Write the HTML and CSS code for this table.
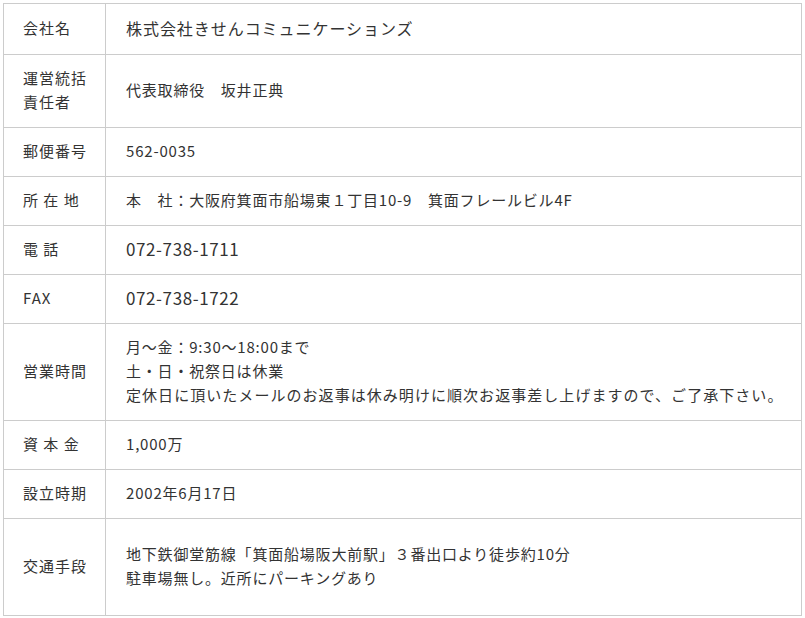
FILE: index.html
```html
<!DOCTYPE html>
<html lang="ja">
<head>
  <meta charset="UTF-8">
  <title>会社概要</title>
  <link rel="stylesheet" href="styles.css">
</head>
<body>
  <div class="wrap">
    <table class="company-table">
      <tr>
        <th>会社名</th>
        <td class="big">株式会社きせんコミュニケーションズ</td>
      </tr>
      <tr>
        <th>運営統括<br>責任者</th>
        <td>代表取締役　坂井正典</td>
      </tr>
      <tr>
        <th>郵便番号</th>
        <td>562-0035</td>
      </tr>
      <tr>
        <th>所 在 地</th>
        <td>本　社：大阪府箕面市船場東１丁目10-9　箕面フレールビル4F</td>
      </tr>
      <tr>
        <th>電 話</th>
        <td class="tel">072-738-1711</td>
      </tr>
      <tr>
        <th>FAX</th>
        <td class="tel">072-738-1722</td>
      </tr>
      <tr>
        <th>営業時間</th>
        <td>月～金：9:30～18:00まで<br>土・日・祝祭日は休業<br><span class="note">定休日に頂いたメールのお返事は休み明けに順次お返事差し上げますので、ご了承下さい。</span></td>
      </tr>
      <tr>
        <th>資 本 金</th>
        <td>1,000万</td>
      </tr>
      <tr>
        <th>設立時期</th>
        <td>2002年6月17日</td>
      </tr>
      <tr>
        <th>交通手段</th>
        <td class="access">地下鉄御堂筋線「箕面船場阪大前駅」３番出口より徒歩約10分<br>駐車場無し。近所にパーキングあり</td>
      </tr>
    </table>
  </div>
</body>
</html>
```

FILE: styles.css
```css
body {
  margin: 0;
  background: #fff;
  color: #333;
  font-family: "Noto Sans CJK JP", "Noto Sans", sans-serif;
}
.wrap { padding: 3px 3px 0 3px; }
.company-table {
  width: 799px;
  border-collapse: collapse;
  font-size: 15px;
  line-height: 24px;
}
.company-table th,
.company-table td {
  border: 1px solid #ccc;
  padding: 11px 0 13px 20px;
  text-align: left;
  vertical-align: middle;
  font-weight: normal;
}
.company-table th {
  width: 82px;
  padding-left: 19px;
  letter-spacing: 1px;
}
.company-table td { letter-spacing: 0.8px; }
.company-table td .note { letter-spacing: 1.05px; }
.company-table td.big { font-size: 16px; line-height: 26px; letter-spacing: 0.95px; }
.company-table td.tel { font-size: 17px; letter-spacing: 0.6px; }
.company-table td.access { padding-top: 23px; padding-bottom: 25px; }
```
